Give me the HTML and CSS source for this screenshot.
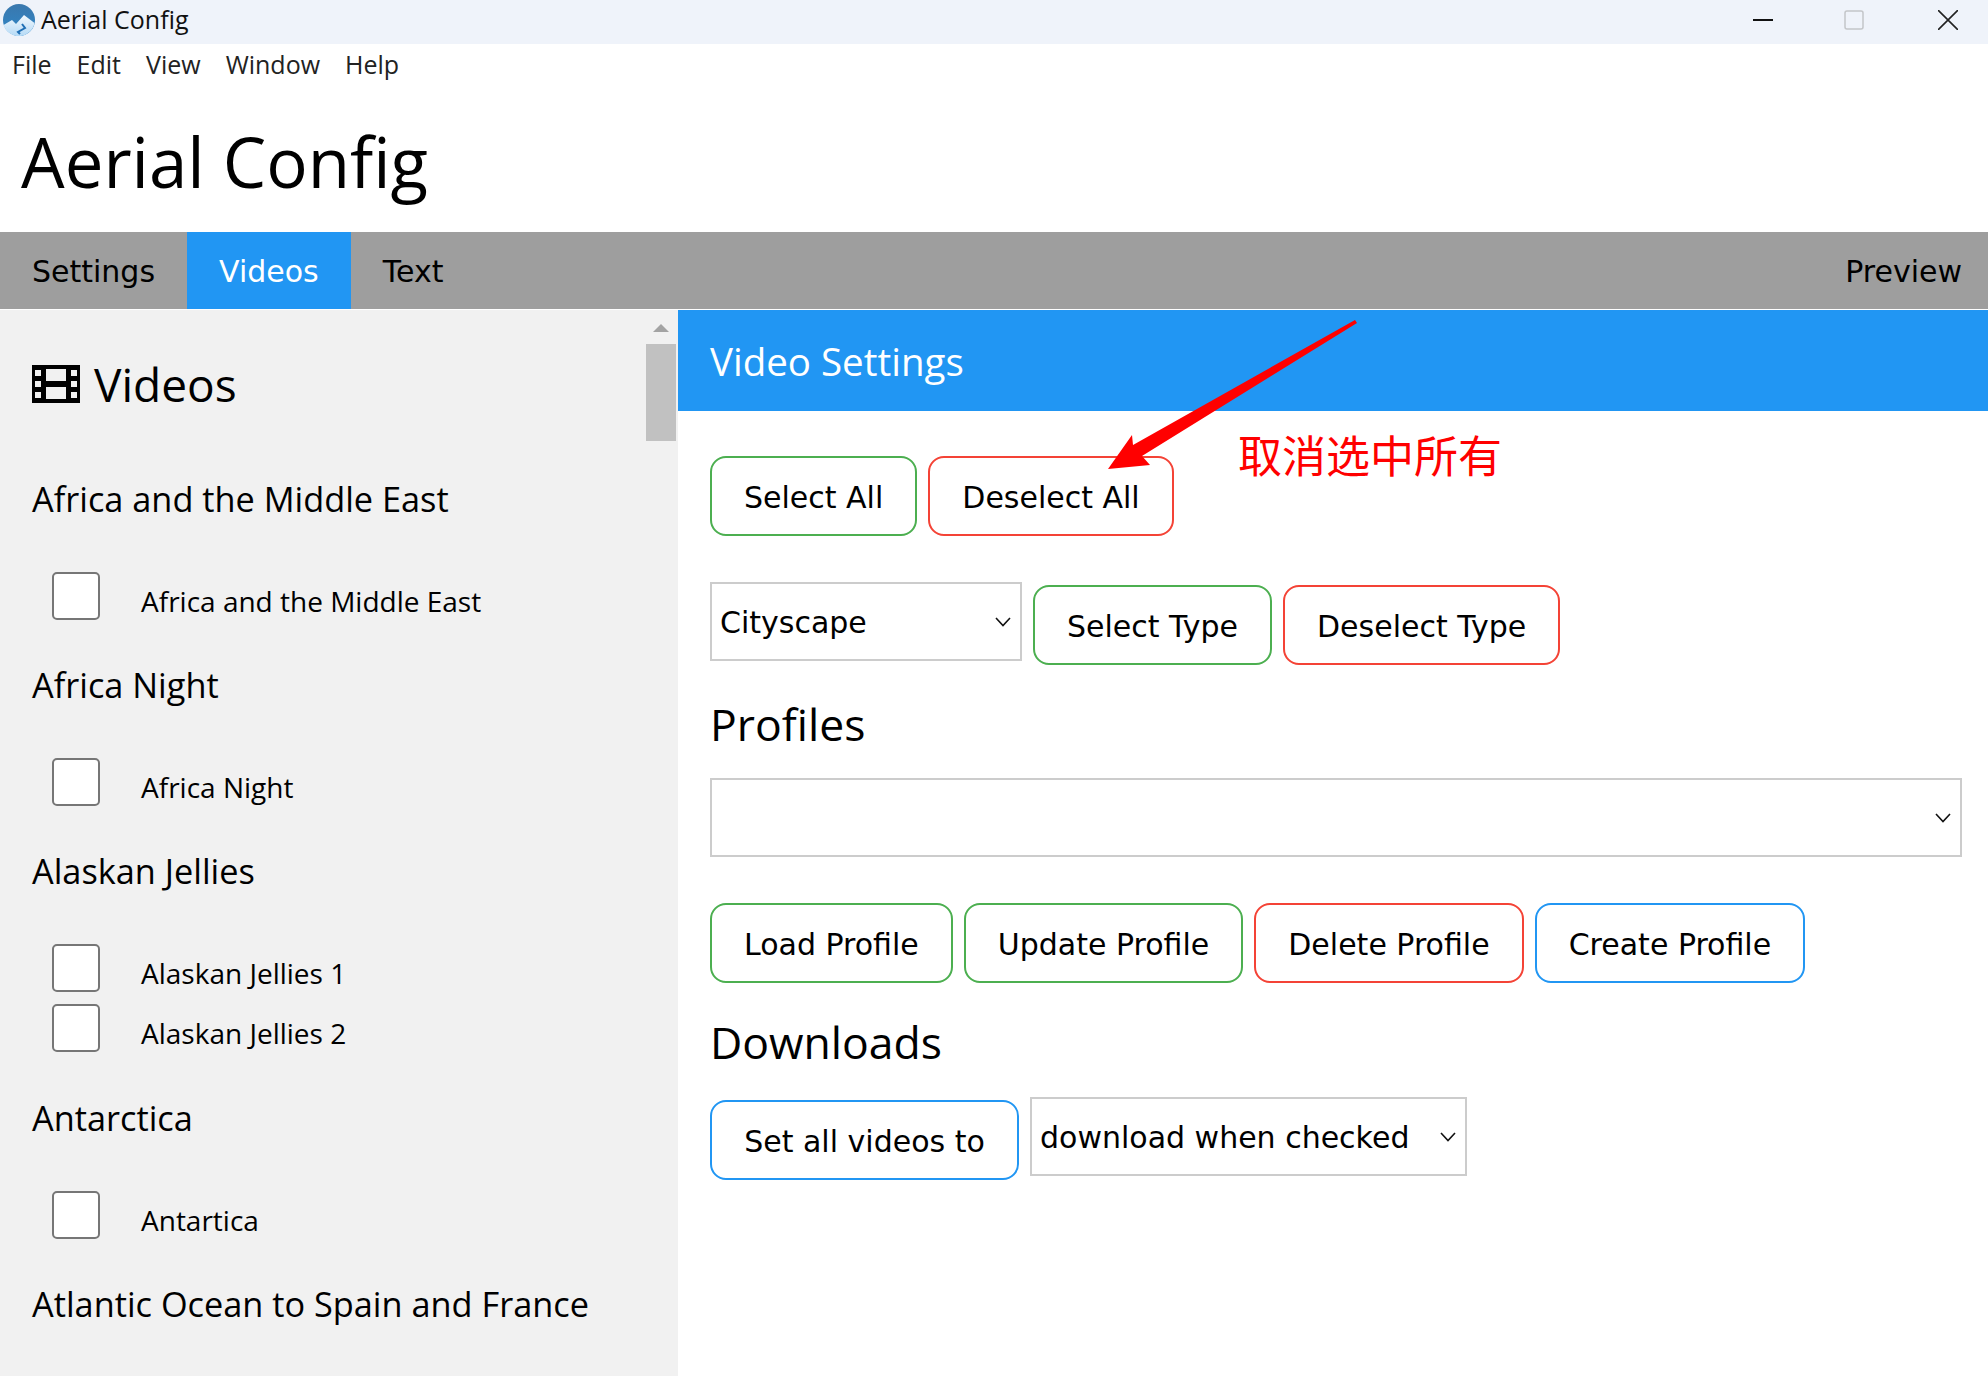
FILE: index.html
```html
<!DOCTYPE html>
<html lang="en">
<head>
  <meta charset="UTF-8" />
  <title>Aerial Config</title>
  <link rel="stylesheet" href="styles.css">
</head>
<body>
  <div class="titlebar">
    <svg class="app-logo" viewBox="0 0 32 32" width="32" height="32">
      <defs>
        <linearGradient id="sky" x1="0" y1="0" x2="0" y2="1">
          <stop offset="0" stop-color="#3a78ad"/>
          <stop offset="1" stop-color="#2f86c8"/>
        </linearGradient>
        <linearGradient id="snow" x1="0" y1="0" x2="0" y2="1">
          <stop offset="0" stop-color="#f2f8fd"/>
          <stop offset="1" stop-color="#b5daf6"/>
        </linearGradient>
      </defs>
      <circle cx="16" cy="16" r="16" fill="url(#sky)"/>
      <path d="M0.5 21 L9 16 L13 20 L21 11 L31.5 19 A16 16 0 0 1 0.5 21Z" fill="url(#snow)"/>
      <path d="M19 20 L22 24 L15 28 L17 30" fill="none" stroke="#1f6fb5" stroke-width="2"/>
    </svg>
    <span class="app-name">Aerial Config</span>
    <div class="window-btns">
      <svg viewBox="0 0 20 20" width="20" height="20"><path d="M0 10H20" stroke="#111" stroke-width="2"/></svg>
      <svg viewBox="0 0 20 20" width="20" height="20"><rect x="1" y="1" width="18" height="18" rx="2" fill="none" stroke="#c4c6c9" stroke-width="1.5"/></svg>
      <svg class="close-icon" viewBox="0 0 20 20" width="20" height="20"><path d="M0 0L20 20M20 0L0 20" stroke="#222" stroke-width="1.6"/></svg>
    </div>
  </div>

  <div class="menubar">
    <span>File</span><span>Edit</span><span>View</span><span>Window</span><span>Help</span>
  </div>

  <h1 class="page-title">Aerial Config</h1>

  <div class="tabs">
    <a class="tab">Settings</a>
    <a class="tab active">Videos</a>
    <a class="tab">Text</a>
    <a class="tab preview">Preview</a>
  </div>

  <div class="main">
    <div class="sidebar">
      <div class="video-list">
        <h2 class="videos-title">
          <svg class="film" viewBox="0 0 48 38" width="48" height="38">
            <path fill="#000" fill-rule="evenodd" d="M0 0H48V38H0Z M3 5V11H9V5Z M3 16V22H9V16Z M3 27V33H9V27Z M39 5V11H45V5Z M39 16V22H45V16Z M39 27V33H45V27Z M14 4V16H34V4Z M14 22V34H34V22Z"/>
          </svg>
          Videos
        </h2>

        <div class="group">
          <h3>Africa and the Middle East</h3>
          <label class="video"><input type="checkbox"><span>Africa and the Middle East</span></label>
        </div>
        <div class="group">
          <h3>Africa Night</h3>
          <label class="video"><input type="checkbox"><span>Africa Night</span></label>
        </div>
        <div class="group">
          <h3>Alaskan Jellies</h3>
          <label class="video"><input type="checkbox"><span>Alaskan Jellies 1</span></label>
          <label class="video"><input type="checkbox"><span>Alaskan Jellies 2</span></label>
        </div>
        <div class="group">
          <h3>Antarctica</h3>
          <label class="video"><input type="checkbox"><span>Antartica</span></label>
        </div>
        <div class="group">
          <h3>Atlantic Ocean to Spain and France</h3>
        </div>
      </div>
      <div class="scrollbar">
        <div class="scroll-up"></div>
        <div class="scroll-thumb"></div>
      </div>
    </div>

    <div class="panel">
      <div class="panel-header">Video Settings</div>
      <div class="panel-body">
        <div class="row first-row">
          <button class="btn green">Select All</button>
          <button class="btn red">Deselect All</button>
        </div>

        <div class="row type-row">
          <select class="type-select"><option>Cityscape</option></select>
          <button class="btn green">Select Type</button>
          <button class="btn red">Deselect Type</button>
        </div>

        <h3 class="section-title profiles-title">Profiles</h3>
        <select class="profile-select"><option></option></select>

        <div class="row profile-row">
          <button class="btn green">Load Profile</button>
          <button class="btn green">Update Profile</button>
          <button class="btn red">Delete Profile</button>
          <button class="btn blue">Create Profile</button>
        </div>

        <h3 class="section-title downloads-title">Downloads</h3>
        <div class="row download-row">
          <button class="btn blue set-all">Set all videos to</button>
          <select class="download-select"><option>download when checked</option></select>
        </div>
      </div>
    </div>
  </div>

  <!-- annotation drawn on top of the screenshot -->
  <svg class="arrow" viewBox="0 0 1988 1376" width="1988" height="1376">
    <polygon fill="#ff0000" points="1355,320 1357,323 1142,456 1150,465 1108,469 1132,435 1133,445"/>
  </svg>
  <div class="note">取消选中所有</div>
</body>
</html>
```

FILE: styles.css
```css
* { box-sizing: border-box; }
html, body { margin: 0; padding: 0; }
body { position: relative; width: 1988px; height: 1376px; overflow: hidden; background: #fff; color: #000; font-family: "DejaVu Sans", sans-serif; }

.titlebar { height: 44px; background: #eff3fa; display: flex; align-items: center; padding: 0 0 4px 3px; }
.app-logo { flex: none; }
.app-name { margin: 0 0 2px 6px; font: 25px "Open Sans", sans-serif; color: #111; }
.window-btns { margin-left: auto; display: flex; gap: 71px; padding-right: 30px; }
.close-icon { margin-left: 3px; }

.menubar { height: 44px; display: flex; gap: 25px; padding: 0 0 4px 12px; align-items: center; font: 25px "Open Sans", sans-serif; color: #222; }

.page-title { margin: 0; height: 144px; padding: 26px 0 0 21px; font: 400 69px/94px "Open Sans", sans-serif; }

.tabs { height: 77px; background: #9e9e9e; display: flex; font-size: 30px; }
.tab { padding: 0 32px; line-height: 79px; }
.tab.active { background: #2196f3; color: #fff; }
.tab.preview { margin-left: auto; padding-right: 26px; }

.main { margin-top: 1px; display: flex; height: 1066px; }

.sidebar { width: 678px; flex: none; background: #f1f1f1; display: flex; overflow: hidden; }
.video-list { flex: 1; padding-left: 32px; }
.videos-title { margin: 40px 0 0; height: 68px; display: flex; align-items: center; gap: 14px; font: 400 46px/68px "Open Sans", sans-serif; }
.film { flex: none; }

.group { height: 186px; }
.group:nth-child(2) { margin-top: 33px; }
.group:nth-child(4) { height: 247px; }
.group h3 { margin: 0; padding-top: 24px; height: 72px; font: 400 34.3px/48px "Open Sans", sans-serif; }
.video { display: flex; height: 60px; align-items: center; padding-left: 20px; }
.video:first-of-type { margin-top: 43px; }
.video input { appearance: none; width: 48px; height: 48px; margin: 0; background: #fff; border: 2px solid #767676; border-radius: 5px; flex: none; }
.video span { margin-left: 41px; padding-top: 9px; font: 28px "Open Sans", sans-serif; }

.scrollbar { width: 30px; margin-right: 2px; flex: none; display: flex; flex-direction: column; align-items: center; }
.scroll-up { margin-top: 14px; width: 0; height: 0; border-left: 8px solid transparent; border-right: 8px solid transparent; border-bottom: 8px solid #a3a3a3; }
.scroll-thumb { margin-top: 12px; width: 30px; height: 97px; background: #c1c1c1; }

.panel { flex: 1; }
.panel-header { height: 101px; background: #2196f3; color: #fff; padding-left: 32px; font: 400 38.5px/103px "Open Sans", sans-serif; }
.panel-body { padding-left: 32px; padding-right: 26px; }

.row { display: flex; align-items: flex-start; gap: 11px; }
.first-row { margin-top: 45px; }
.type-row { margin-top: 46px; }
.type-row .btn, .download-row .btn { margin-top: 3px; }
.profile-row { margin-top: 46px; }
.download-row { margin-top: 23px; }

.btn { height: 80px; padding: 2px 32px 0; background: #fff; border: 2px solid #000; border-radius: 16px; font: 30px "DejaVu Sans", sans-serif; color: #000; white-space: nowrap; }
.btn.green { border-color: #4caf50; }
.btn.red { border-color: #f44336; }
.btn.blue { border-color: #2196f3; }
.set-all { width: 309px; padding: 2px 0 0; }

select {
  appearance: none;
  height: 79px;
  background: #fff url("data:image/svg+xml,%3Csvg xmlns='http://www.w3.org/2000/svg' width='16' height='10'%3E%3Cpath d='M1 1L8 8.5L15 1' fill='none' stroke='%23111' stroke-width='1.6'/%3E%3C/svg%3E") no-repeat right 9px center;
  border: 2px solid #ccc;
  border-radius: 0;
  font: 30px "DejaVu Sans", sans-serif;
  color: #000;
  padding: 2px 8px 0;
}
.type-select { width: 312px; }
.profile-select { width: 100%; display: block; }
.download-select { width: 437px; }

.section-title { margin: 0; font: 400 44.5px/64px "Open Sans", sans-serif; }
.profiles-title { margin-top: 27px; height: 86px; }
.downloads-title { margin-top: 27px; height: 64px; }

.arrow { position: absolute; left: 0; top: 0; pointer-events: none; }
.note { position: absolute; left: 1238px; top: 427px; font: 44px/54px "Noto Sans CJK SC", sans-serif; color: #ff0000; }
```
